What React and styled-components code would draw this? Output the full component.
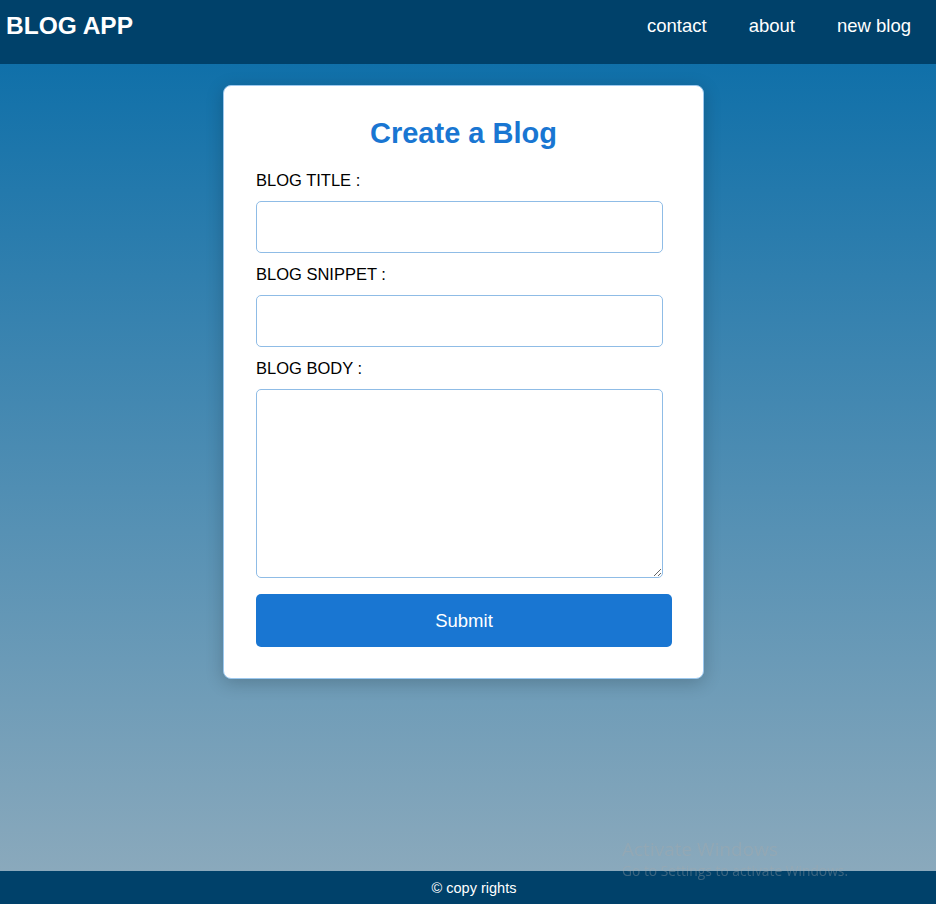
import styled, { createGlobalStyle } from "styled-components";

const GlobalStyle = createGlobalStyle`
  html, body {
    margin: 0;
    padding: 0;
  }
  body {
    font-family: "Liberation Sans", Arial, sans-serif;
  }
  * {
    box-sizing: border-box;
  }
`;

const Page = styled.div`
  display: flex;
  flex-direction: column;
  min-height: 904px;
`;

const Header = styled.header`
  height: 64px;
  background-color: #00416a;
  display: flex;
  align-items: center;
  justify-content: space-between;
  padding: 0 25px 12px 6px;
  color: #fff;
`;

const Brand = styled.h1`
  margin: 0;
  font-size: 24.5px;
  font-weight: bold;
`;

const Nav = styled.nav`
  display: flex;
  gap: 42px;
`;

const NavLink = styled.a`
  color: #fff;
  font-size: 18.5px;
  text-decoration: none;
  cursor: pointer;
`;

const Main = styled.main`
  flex: 1;
  background: linear-gradient(180deg, #1070a9 0%, #8aa9bc 100%);
  display: flex;
  justify-content: center;
  align-items: flex-start;
  padding: 21px 0 0 0;
`;

const Card = styled.form`
  width: 481px;
  margin-left: -9px;
  background-color: #fff;
  border: 1px solid #9cc8ee;
  border-radius: 8px;
  box-shadow: 0 4px 18px rgba(0, 0, 0, 0.2);
  padding: 31px 32px;
  display: flex;
  flex-direction: column;
`;

const Title = styled.h2`
  margin: 0 0 22px 0;
  font-size: 29px;
  line-height: 32px;
  text-align: center;
  color: #1976d2;
  font-weight: bold;
`;

const Label = styled.label`
  font-size: 16.5px;
  line-height: 18px;
  color: #000;
  margin-bottom: 12px;
`;

const Input = styled.input`
  width: 407px;
  height: 52px;
  border: 1px solid #8fbce6;
  border-radius: 5px;
  padding: 0 10px;
  font-size: 16px;
  margin-bottom: 12px;
  outline: none;
`;

const TextArea = styled.textarea`
  width: 407px;
  height: 189px;
  border: 1px solid #8fbce6;
  border-radius: 5px;
  padding: 10px;
  font-size: 16px;
  margin-bottom: 16px;
  outline: none;
  display: block;
`;

const SubmitButton = styled.button`
  width: 416px;
  height: 53px;
  border: none;
  border-radius: 5px;
  background-color: #1976d2;
  color: #fff;
  font-family: "Liberation Sans", Arial, sans-serif;
  font-size: 18.5px;
  cursor: pointer;
`;

const Footer = styled.footer`
  height: 33px;
  background-color: #00416a;
  color: #fff;
  font-size: 14.5px;
  display: flex;
  align-items: center;
  justify-content: center;
  padding-left: 12px;
`;

const Watermark = styled.div`
  position: fixed;
  left: 622px;
  top: 836px;
  color: rgba(170, 170, 170, 0.35);
  font-family: "Open Sans", "Noto Sans", sans-serif;
  pointer-events: none;
`;

const WatermarkTitle = styled.div`
  font-size: 19px;
  line-height: 26px;
`;

const WatermarkText = styled.div`
  font-size: 13.8px;
  line-height: 18px;
`;

const App = () => {
  return (
    <Page>
      <GlobalStyle />
      <Header>
        <Brand>BLOG APP</Brand>
        <Nav>
          <NavLink>contact</NavLink>
          <NavLink>about</NavLink>
          <NavLink>new blog</NavLink>
        </Nav>
      </Header>
      <Main>
        <Card onSubmit={(e) => e.preventDefault()}>
          <Title>Create a Blog</Title>
          <Label>BLOG TITLE :</Label>
          <Input type="text" />
          <Label>BLOG SNIPPET :</Label>
          <Input type="text" />
          <Label>BLOG BODY :</Label>
          <TextArea />
          <SubmitButton type="submit">Submit</SubmitButton>
        </Card>
      </Main>
      <Footer>© copy rights</Footer>
      <Watermark>
        <WatermarkTitle>Activate Windows</WatermarkTitle>
        <WatermarkText>Go to Settings to activate Windows.</WatermarkText>
      </Watermark>
    </Page>
  );
};

export default App;
